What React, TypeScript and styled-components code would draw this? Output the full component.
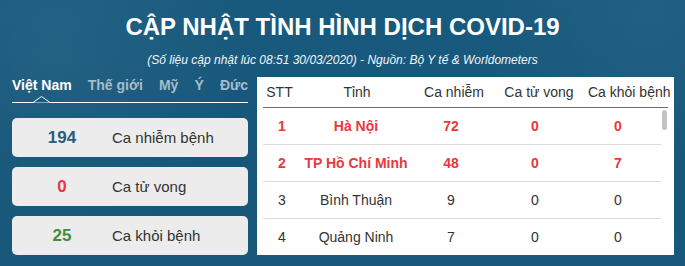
import React, { FC } from 'react';
import styled, { createGlobalStyle } from 'styled-components';

type Stat = {
  value: number;
  label: string;
  tone: 'blue' | 'red' | 'green';
};

type Province = {
  name: string;
  cases: number;
  deaths: number;
  recovered: number;
};

const stats: Stat[] = [
  { value: 194, label: 'Ca nhiễm bệnh', tone: 'blue' },
  { value: 0, label: 'Ca tử vong', tone: 'red' },
  { value: 25, label: 'Ca khỏi bệnh', tone: 'green' },
];

const tabs = ['Việt Nam', 'Thế giới', 'Mỹ', 'Ý', 'Đức'];

const provinces: Province[] = [
  { name: 'Hà Nội', cases: 72, deaths: 0, recovered: 0 },
  { name: 'TP Hồ Chí Minh', cases: 48, deaths: 0, recovered: 7 },
  { name: 'Bình Thuận', cases: 9, deaths: 0, recovered: 0 },
  { name: 'Quảng Ninh', cases: 7, deaths: 0, recovered: 0 },
];

const toneColors = {
  blue: '#2b5c7e',
  red: '#e8383d',
  green: '#3d8c3f',
};

const GlobalStyle = createGlobalStyle`
  html, body {
    margin: 0;
    padding: 0;
  }
  body {
    font-family: 'Liberation Sans', Arial, sans-serif;
    background: #165679;
  }
`;

const App: FC = () => (
  <>
    <GlobalStyle />
    <Page>
      <Title>CẬP NHẬT TÌNH HÌNH DỊCH COVID-19</Title>
      <Subtitle>(Số liệu cập nhật lúc 08:51 30/03/2020) - Nguồn: Bộ Y tế &amp; Worldometers</Subtitle>
      <Main>
        <Side>
          <TabBar>
            {tabs.map((tab, index) => (
              <Tab key={tab} active={index === 0}>{tab}</Tab>
            ))}
            <Caret width="17" height="7" viewBox="0 0 17 7">
              <polyline points="0,6.5 8.5,0.5 17,6.5" fill="#185a7d" stroke="#fff" strokeWidth="1" />
            </Caret>
          </TabBar>
          <Cards>
            {stats.map(({ value, label, tone }) => (
              <Card key={label}>
                <Number tone={tone}>{value}</Number>
                <Label>{label}</Label>
              </Card>
            ))}
          </Cards>
        </Side>
        <Panel>
          <HeadRow>
            <HeadCell>STT</HeadCell>
            <HeadCell>Tỉnh</HeadCell>
            <HeadCell>Ca nhiễm</HeadCell>
            <HeadCell>Ca tử vong</HeadCell>
            <HeadCell>Ca khỏi bệnh</HeadCell>
          </HeadRow>
          <Body>
            {provinces.map(({ name, cases, deaths, recovered }, index) => (
              <Row key={name} hot={index < 2}>
                <Cell>{index + 1}</Cell>
                <Cell>{name}</Cell>
                <Cell>{cases}</Cell>
                <Cell>{deaths}</Cell>
                <Cell>{recovered}</Cell>
              </Row>
            ))}
            <ScrollThumb />
          </Body>
        </Panel>
      </Main>
    </Page>
  </>
);

const Page = styled.div`
  width: 685px;
  height: 266px;
  overflow: hidden;
  box-sizing: border-box;
  padding-top: 13px;
  background:
    radial-gradient(circle at 8% 20%, rgba(255, 255, 255, 0.05), transparent 30%),
    radial-gradient(circle at 95% 10%, rgba(255, 255, 255, 0.04), transparent 25%),
    linear-gradient(180deg, #185a7e 0%, #165679 60%, #17587b 100%);
  color: #fff;
`;

const Title = styled.h1`
  margin: 0;
  text-align: center;
  font-size: 24px;
  line-height: 28px;
  font-weight: 700;
  color: #fff;
`;

const Subtitle = styled.p`
  margin: 11px 0 0;
  text-align: center;
  font-size: 12px;
  line-height: 16px;
  font-style: italic;
  color: #f2f6f9;
`;

const Main = styled.div`
  display: grid;
  grid-template-columns: 236px 417px;
  gap: 9px;
  margin-top: 9px;
  padding-left: 12px;
`;

const Side = styled.div`
  display: flex;
  flex-direction: column;
`;

const TabBar = styled.div`
  position: relative;
  display: flex;
  justify-content: space-between;
  height: 25px;
  border-bottom: 1px solid #fff;
`;

const Tab = styled.span<{ active: boolean }>`
  font-size: 14px;
  line-height: 17px;
  font-weight: 700;
  white-space: nowrap;
  color: ${({ active }) => (active ? '#fff' : '#a4bccb')};
`;

const Caret = styled.svg`
  position: absolute;
  left: 21px;
  bottom: -1px;
  overflow: visible;
`;

const Cards = styled.div`
  display: flex;
  flex-direction: column;
  gap: 10px;
  margin-top: 15px;
`;

const Card = styled.div`
  display: grid;
  grid-template-columns: 100px 1fr;
  align-items: center;
  height: 39px;
  border-radius: 5px;
  background: #ececec;
`;

const Number = styled.span<{ tone: Stat['tone'] }>`
  text-align: center;
  font-size: 17px;
  font-weight: 700;
  color: ${({ tone }) => toneColors[tone]};
`;

const Label = styled.span`
  font-size: 15px;
  color: #333;
`;

const Panel = styled.div`
  display: flex;
  flex-direction: column;
  height: 178px;
  padding: 0 6px;
  background: #fff;
  color: #333;
`;

const HeadRow = styled.div`
  display: grid;
  grid-template-columns: 33px 122px 72px 98px 72px;
  align-items: center;
  height: 30px;
  border-bottom: 1px solid #6d6d6d;
`;

const HeadCell = styled.div`
  text-align: center;
  font-size: 14px;
  white-space: nowrap;
  color: #333;
`;

const Body = styled.div`
  position: relative;
  flex: 1;
  padding-right: 7px;
  overflow: hidden;
`;

const ScrollThumb = styled.div`
  position: absolute;
  top: 2px;
  right: 1px;
  width: 5px;
  height: 20px;
  border-radius: 3px;
  background: #c3c3c3;
`;

const Row = styled.div<{ hot: boolean }>`
  display: grid;
  grid-template-columns: 38px 110px 80px 88px 78px;
  align-items: center;
  height: 36px;
  border-bottom: 1px solid #dcdcdc;
  font-size: 14px;
  font-weight: ${({ hot }) => (hot ? 700 : 400)};
  color: ${({ hot }) => (hot ? '#e8383d' : '#333')};

  &:last-of-type {
    border-bottom: none;
  }
`;

const Cell = styled.div`
  text-align: center;
  white-space: nowrap;
`;

export default App;
